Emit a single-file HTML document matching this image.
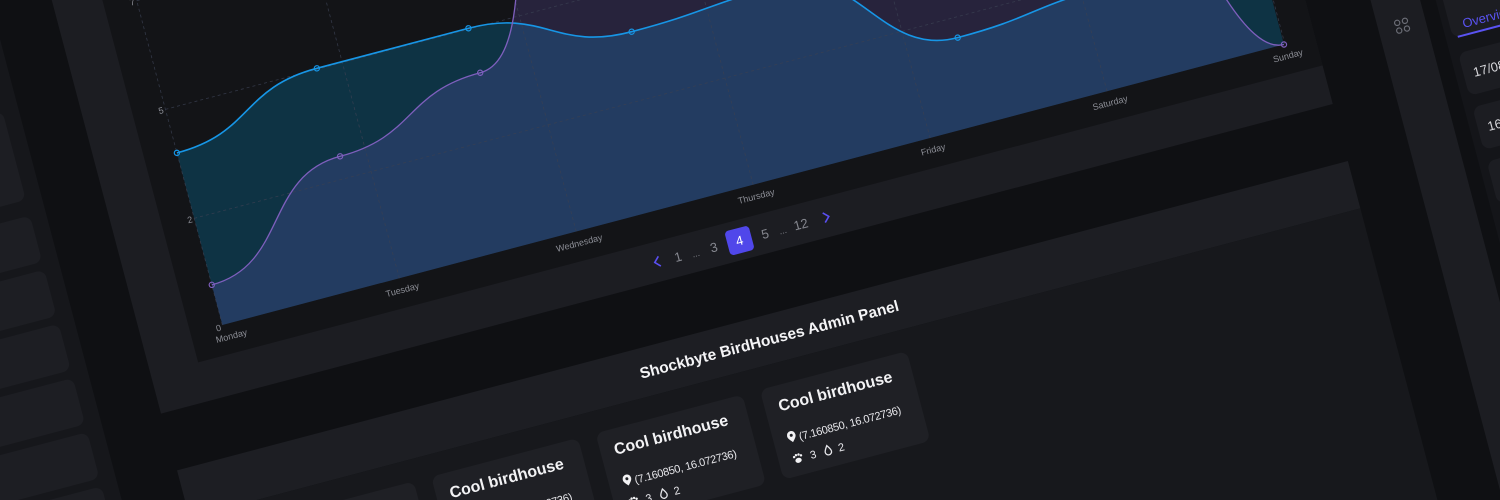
<!DOCTYPE html>
<html><head><meta charset="utf-8"><style>
html,body{margin:0;padding:0;width:1500px;height:500px;overflow:hidden;background:#0f1013}
svg{display:block}
text{font-family:"Liberation Sans",sans-serif}
</style></head><body>
<svg width="1500" height="500" viewBox="0 0 1500 500" xmlns="http://www.w3.org/2000/svg">
<rect width="1500" height="500" fill="#0f1013"/>
<g transform="rotate(-14.8)">
  <rect x="-320" y="-400" width="310" height="1400" fill="#16171b"/>
  <g fill="#1d1e23">
    <rect x="-260" y="0" width="234" height="92" rx="8"/>
    <rect x="-260" y="108" width="234" height="92" rx="8"/>
    <rect x="-260" y="216" width="234" height="48" rx="8"/>
    <rect x="-260" y="272" width="234" height="48" rx="8"/>
    <rect x="-260" y="328" width="234" height="48" rx="8"/>
    <rect x="-260" y="384" width="234" height="48" rx="8"/>
    <rect x="-260" y="440" width="234" height="48" rx="8"/>
    <rect x="-260" y="496" width="234" height="48" rx="8"/>
  </g>
  <rect x="50" y="-400" width="1212" height="841" fill="#1c1d22"/>
  <rect x="99" y="-400" width="1163" height="801" fill="#131417"/>
  <path d="M132,193 C210.4,193 210.5,147 288.9,147 C367.3,147 367.3,147 445.7,147 C524.1,147 524.2,192 602.6,192 C681,192 681,185 759.4,185 C837.8,185 837.9,281 916.3,281 C994.7,281 994.7,270 1073.1,270 C1151.5,270 1151.6,250 1230,250 L1230,371 L132,371 Z" fill="rgb(0,150,215)" fill-opacity="0.24"/>
  <path d="M132,329.5 C210.4,329.5 210.5,238 288.9,238 C367.3,238 367.3,193 445.7,193 C524.1,193 524.2,-100 602.6,-100 C681,-100 681,-120 759.4,-120 C837.8,-120 837.9,-100 916.3,-100 C994.7,-100 994.7,-50 1073.1,-50 C1151.5,-50 1151.6,371 1230,371 L1230,371 L132,371 Z" fill="rgb(125,100,225)" fill-opacity="0.19"/>
  <g stroke="#3a4052" stroke-width="0.8" stroke-dasharray="3 3" fill="none" opacity="0.8">
    <line x1="132" y1="35.6" x2="1231" y2="35.6"/>
    <line x1="132" y1="148" x2="1231" y2="148"/>
    <line x1="132" y1="260.7" x2="1231" y2="260.7"/>
    <line x1="132" y1="-400" x2="132" y2="371"/>
    <line x1="315" y1="-400" x2="315" y2="371"/>
    <line x1="498" y1="-400" x2="498" y2="371"/>
    <line x1="681" y1="-400" x2="681" y2="371"/>
    <line x1="864" y1="-400" x2="864" y2="371"/>
    <line x1="1047" y1="-400" x2="1047" y2="371"/>
    <line x1="1231" y1="-400" x2="1231" y2="371"/>
  </g>
  <path d="M132,193 C210.4,193 210.5,147 288.9,147 C367.3,147 367.3,147 445.7,147 C524.1,147 524.2,192 602.6,192 C681,192 681,185 759.4,185 C837.8,185 837.9,281 916.3,281 C994.7,281 994.7,270 1073.1,270 C1151.5,270 1151.6,250 1230,250" fill="none" stroke="#1796e6" stroke-width="1.6"/>
  <path d="M132,329.5 C210.4,329.5 210.5,238 288.9,238 C367.3,238 367.3,193 445.7,193 C524.1,193 524.2,-100 602.6,-100 C681,-100 681,-120 759.4,-120 C837.8,-120 837.9,-100 916.3,-100 C994.7,-100 994.7,-50 1073.1,-50 C1151.5,-50 1151.6,371 1230,371" fill="none" stroke="#7e5fbd" stroke-width="1.3"/>
  <g fill="none" stroke="#1796e6" stroke-width="1.2">
    <circle cx="132" cy="193" r="2.6"/><circle cx="288.9" cy="147" r="2.6"/><circle cx="445.7" cy="147" r="2.6"/><circle cx="602.6" cy="192" r="2.6"/><circle cx="916.3" cy="281" r="2.6"/>
  </g>
  <g fill="none" stroke="#7e5fbd" stroke-width="1.2">
    <circle cx="132" cy="329.5" r="2.6"/><circle cx="288.9" cy="238" r="2.6"/><circle cx="445.7" cy="193" r="2.6"/><circle cx="1230" cy="371" r="2.6"/>
  </g>
  <g font-size="9" fill="#8c8e96">
    <text x="130" y="39" text-anchor="end">7</text>
    <text x="130" y="151" text-anchor="end">5</text>
    <text x="130" y="264" text-anchor="end">2</text>
    <text x="130" y="376" text-anchor="end">0</text>
    <text x="122" y="387">Monday</text>
    <text x="315" y="386" text-anchor="middle">Tuesday</text>
    <text x="498" y="386" text-anchor="middle">Wednesday</text>
    <text x="681" y="386" text-anchor="middle">Thursday</text>
    <text x="864" y="386" text-anchor="middle">Friday</text>
    <text x="1047" y="386" text-anchor="middle">Saturday</text>
    <text x="1231" y="386" text-anchor="middle">Sunday</text>
  </g>
  <g font-size="13" fill="#85878f">
    <path d="M571,416 L566,421 L571,426" fill="none" stroke="#5a4ff2" stroke-width="1.6"/>
    <text x="590" y="426" text-anchor="middle">1</text>
    <text x="608" y="426" text-anchor="middle" font-size="9">...</text>
    <text x="627" y="426" text-anchor="middle">3</text>
    <rect x="641" y="409" width="25" height="25" rx="4" fill="#5047ea"/>
    <text x="653.5" y="426" text-anchor="middle" fill="#fff">4</text>
    <text x="680" y="426" text-anchor="middle">5</text>
    <text x="698" y="426" text-anchor="middle" font-size="9">...</text>
    <text x="717" y="426" text-anchor="middle">12</text>
    <path d="M741,416 L746,421 L741,426" fill="none" stroke="#5a4ff2" stroke-width="1.6"/>
  </g>
  <rect x="51" y="500" width="1211" height="49" fill="#1d1e23"/>
  <rect x="51" y="549" width="1211" height="500" fill="#17181c"/>
  <text x="657" y="530" text-anchor="middle" font-size="15.5" font-weight="bold" fill="#f4f4f6">Shockbyte BirdHouses Admin Panel</text>
  <g>
    <rect x="125" y="571" width="152" height="93" rx="8" fill="#1f2025"/>
    <rect x="295" y="571" width="152" height="93" rx="8" fill="#1f2025"/>
    <rect x="465" y="571" width="152" height="93" rx="8" fill="#1f2025"/>
    <rect x="635" y="571" width="152" height="93" rx="8" fill="#1f2025"/>
  </g>
  <g fill="#f2f2f4" font-size="16" font-weight="bold">
    <text x="309" y="597">Cool birdhouse</text>
    <text x="479" y="597">Cool birdhouse</text>
    <text x="649" y="597">Cool birdhouse</text>
  </g>
  <g>
    <g>
      <path d="M653.8,630 C650.5,626.5 649.5,625 649.5,623 A4.3,4.3 0 0 1 658.1,623 C658.1,625 657.1,626.5 653.8,630 Z" fill="#f2f2f4"/>
      <circle cx="653.8" cy="623" r="1.5" fill="#1f2025"/>
      <text x="661" y="630" font-size="11" letter-spacing="-0.3" fill="#e6e6ea">(7.160850, 16.072736)</text>
      <g fill="#f2f2f4">
        <ellipse cx="654.5" cy="649" rx="3.2" ry="2.5"/>
        <circle cx="651" cy="644.8" r="1.2"/><circle cx="653.3" cy="643.4" r="1.2"/><circle cx="655.9" cy="643.4" r="1.2"/><circle cx="658.1" cy="644.8" r="1.2"/>
      </g>
      <text x="667" y="651" font-size="11" fill="#e6e6ea">3</text>
      <path d="M685.5,642 C683,645.5 682.3,647 682.3,648.3 A3.2,3.2 0 0 0 688.7,648.3 C688.7,647 688,645.5 685.5,642 Z" fill="none" stroke="#e6e6ea" stroke-width="1.3"/>
      <text x="696" y="651" font-size="11" fill="#e6e6ea">2</text>
    </g>
    <g transform="translate(-170,0)">
      <path d="M653.8,630 C650.5,626.5 649.5,625 649.5,623 A4.3,4.3 0 0 1 658.1,623 C658.1,625 657.1,626.5 653.8,630 Z" fill="#f2f2f4"/>
      <circle cx="653.8" cy="623" r="1.5" fill="#1f2025"/>
      <text x="661" y="630" font-size="11" letter-spacing="-0.3" fill="#e6e6ea">(7.160850, 16.072736)</text>
      <g fill="#f2f2f4">
        <ellipse cx="654.5" cy="649" rx="3.2" ry="2.5"/>
        <circle cx="651" cy="644.8" r="1.2"/><circle cx="653.3" cy="643.4" r="1.2"/><circle cx="655.9" cy="643.4" r="1.2"/><circle cx="658.1" cy="644.8" r="1.2"/>
      </g>
      <text x="667" y="651" font-size="11" fill="#e6e6ea">3</text>
      <path d="M685.5,642 C683,645.5 682.3,647 682.3,648.3 A3.2,3.2 0 0 0 688.7,648.3 C688.7,647 688,645.5 685.5,642 Z" fill="none" stroke="#e6e6ea" stroke-width="1.3"/>
      <text x="696" y="651" font-size="11" fill="#e6e6ea">2</text>
    </g>
    <g transform="translate(-340,0)">
      <path d="M653.8,630 C650.5,626.5 649.5,625 649.5,623 A4.3,4.3 0 0 1 658.1,623 C658.1,625 657.1,626.5 653.8,630 Z" fill="#f2f2f4"/>
      <text x="661" y="630" font-size="11" letter-spacing="-0.3" fill="#e6e6ea">(7.160850, 16.072736)</text>
    </g>
  </g>
  <rect x="1325" y="-400" width="48" height="1600" fill="#1c1d22"/>
  <g fill="none" stroke="#6b6d76" stroke-width="1.2">
    <circle cx="1345" cy="379" r="2.6"/><circle cx="1353" cy="379" r="2.6"/>
    <circle cx="1345" cy="387" r="2.6"/><circle cx="1353" cy="387" r="2.6"/>
  </g>
  <rect x="1388" y="-400" width="400" height="1600" fill="#141519"/>
  <rect x="1395" y="300" width="300" height="108" rx="8" fill="#1c1d22"/>
  <text x="1408" y="401" font-size="13" fill="#5a53f2">Overview</text>
  <rect x="1400" y="407" width="120" height="2" fill="#5a53f2"/>
  <rect x="1396" y="424" width="300" height="44" rx="8" fill="#1c1d22"/>
  <rect x="1396" y="480" width="300" height="44" rx="8" fill="#1c1d22"/>
  <rect x="1396" y="536" width="300" height="44" rx="8" fill="#1c1d22"/>
  <text x="1406" y="451" font-size="13" fill="#d6d6da">17/08/2023</text>
  <text x="1406" y="507" font-size="13" fill="#d6d6da">16/08/2023</text>
</g>
</svg>
</body></html>
